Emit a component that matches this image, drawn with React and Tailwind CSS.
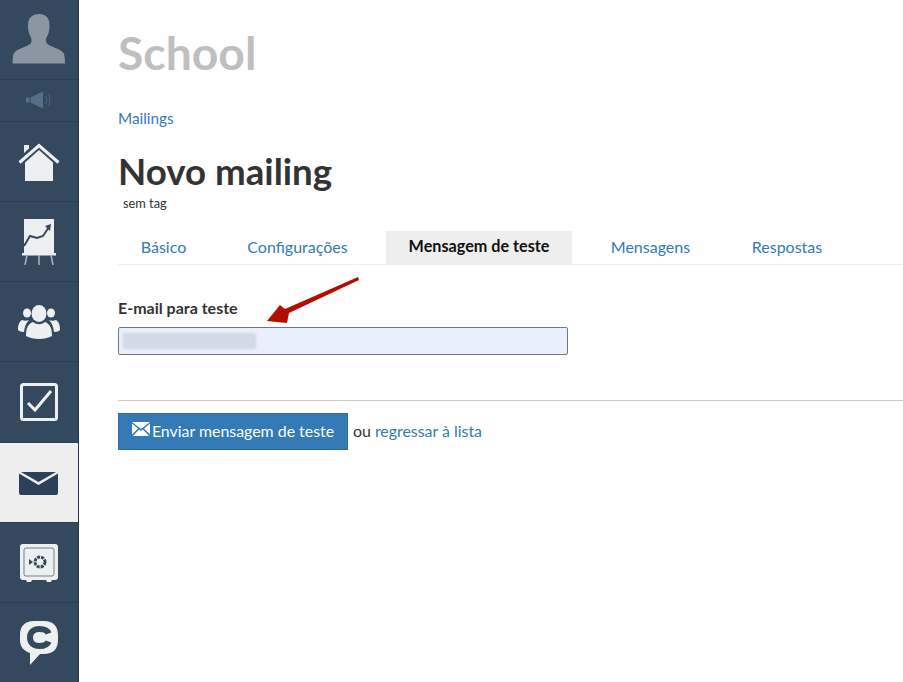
import React from "react";

const Row = ({ h, active, children, last }) => (
  <div className={`flex items-center justify-center shrink-0 ${h} ${active ? "bg-[#eeeeee]" : ""} ${last ? "" : "border-b border-[#2c3e50]"}`}>
    {children}
  </div>
);

const UserIcon = () => (
  <svg width="54" height="52" viewBox="0 0 54 52"><path fill="#8c96a1" d="M27 1c7 0 10.500 4 10.500 11 0 5-.5 8-2.500 11.500-1 2-1.500 4.500-.5 6.500 2.500 3.500 14 5.500 17 10 1 2 1.500 6 1.500 10.500H.5c0-4.500.5-8.500 1.500-10.500 3-4.500 14.500-6.500 17-10 1-2 .5-4.500-.5-6.500C16.500 20 16 17 16 12 16 5 20 1 27 1z"/></svg>
);
const SpeakerIcon = () => (
  <svg width="26" height="18" viewBox="0 0 26 18"><path fill="#557089" d="M0 6.500h3.500v5H0zM4.500 6.500 17 .5v17L4.500 11.500z"/><path fill="none" stroke="#4d667e" strokeWidth="1" d="M19.500 5c1.500 2.500 1.500 5.500 0 8M22 3c2.500 3.500 2.500 8.500 0 12"/></svg>
);
const HomeIcon = () => (
  <svg width="42" height="38" viewBox="0 0 42 38"><path fill="#ecf0f1" d="M6 2h5v3.500L6 10zM7 19.500 21 7l14 12.500V38H7z"/><path fill="none" stroke="#ecf0f1" strokeWidth="3" d="M1.500 19.500 21 2.500l19.500 17"/></svg>
);
const ChartIcon = () => (
  <svg width="34" height="46" viewBox="0 0 34 46">
    <path fill="#ecf0f1" d="M2 0h30v34H2z"/>
    <path fill="none" stroke="#34495e" strokeWidth="2" d="M2 27 8 17l7 2 6-2 6-9"/>
    <path fill="#34495e" d="m23 7 6-2-1 7z"/>
    <path fill="#ecf0f1" d="M0 34h34v2.500H0z"/>
    <path fill="none" stroke="#aeb6bd" strokeWidth="1.500" d="m5 36-2 10M17 36v10M29 36l2 10"/>
  </svg>
);
const UsersIcon = () => (
  <svg width="42" height="34" viewBox="0 0 42 34">
    <g fill="#ecf0f1">
      <ellipse cx="21" cy="8.500" rx="7.500" ry="8.500"/>
      <ellipse cx="9" cy="8" rx="4" ry="4.500"/>
      <ellipse cx="33" cy="8" rx="4" ry="4.500"/>
      <path d="M8 31c0-8 2-12 7-14 4 3 8 3 12 0 5 2 7 6 7 14-7 4-19 4-26 0z"/>
      <path d="M0 25c0-5 1-8 4-10 2 1 5 1 7 0-3 3-4.500 7-5 12-3 0-5-1-6-2zM42 25c0-5-1-8-4-10-2 1-5 1-7 0 3 3 4.500 7 5 12 3 0 5-1 6-2z"/>
    </g>
  </svg>
);
const CheckIcon = () => (
  <svg width="38" height="38" viewBox="0 0 38 38">
    <rect x="1.500" y="1.500" width="35" height="35" rx="2" fill="none" stroke="#ecf0f1" strokeWidth="3"/>
    <path fill="none" stroke="#ecf0f1" strokeWidth="3" d="m8 20 7 7L31 8"/>
  </svg>
);
const MailIcon = () => (
  <svg width="39" height="23" viewBox="0 0 39 23">
    <path fill="#2c4159" d="M0 1.500 19.500 13 39 1.500V21a2 2 0 0 1-2 2H2a2 2 0 0 1-2-2z"/>
    <path fill="#2c4159" d="M2 0h35L19.500 10z"/>
  </svg>
);
const SafeIcon = () => (
  <svg width="38" height="38" viewBox="0 0 38 38">
    <path fill="#ecf0f1" d="M3 0h32a3 3 0 0 1 3 3v30a3 3 0 0 1-3 3h-3l-1 2h-4l-1-2H12l-1 2H7l-1-2H3a3 3 0 0 1-3-3V3a3 3 0 0 1 3-3z"/>
    <rect x="4" y="4" width="30" height="28" rx="2" fill="none" stroke="#6e8091" strokeWidth="1"/>
    <circle cx="20" cy="18" r="5" fill="none" stroke="#34495e" strokeWidth="3" strokeDasharray="3 1"/>
    <path fill="#34495e" d="m9 15 4 3-4 3z"/>
  </svg>
);
const ChatIcon = () => (
  <svg width="38" height="44" viewBox="0 0 38 44">
    <path fill="#ecf0f1" d="M14 0h10c9 0 14 5 14 14v5c0 9-5 14-14 14h-4L10 44V32C4 30 0 26 0 19v-5C0 5 5 0 14 0z"/>
    <path fill="none" stroke="#34495e" strokeWidth="6" d="M28.500 12.500c-1-3-4-4.500-9-4.500-6 0-9.500 3-9.500 8.500S13.500 25 19.500 25c5 0 8-1.500 9-4.500"/>
  </svg>
);

const tabs = [
  { t: "Básico", w: "w-[91px]" },
  { t: "Configurações", w: "w-[145px]" },
  { t: "Mensagem de teste", w: "w-[186px]", active: true },
  { t: "Mensagens", w: "w-[125px]" },
  { t: "Respostas", w: "w-[116px]" },
];

export default function App() {
  return (
    <div className="flex w-[903px] h-[682px] overflow-hidden bg-white font-['Lato','Liberation_Sans',sans-serif]">
      <aside className="w-[79px] shrink-0 h-full flex flex-col bg-[#34495e] border-r border-[#22344a]">
        <Row h="h-[80px]"><div className="pb-[1px]"><UserIcon /></div></Row>
        <Row h="h-[42px]"><div className="pb-[2px]"><SpeakerIcon /></div></Row>
        <Row h="h-[80px]"><HomeIcon /></Row>
        <Row h="h-[80px]"><ChartIcon /></Row>
        <Row h="h-[80px]"><UsersIcon /></Row>
        <Row h="h-[81px]"><CheckIcon /></Row>
        <Row h="h-[80px]" active><div className="pt-[1px] pr-[2px]"><MailIcon /></div></Row>
        <Row h="h-[80px]"><SafeIcon /></Row>
        <Row h="h-[79px]" last><ChatIcon /></Row>
      </aside>
      <main className="flex-1 min-w-0 pl-[39px] relative">
        <h2 className="text-[46.300px] leading-[50px] font-bold text-[#bfbfbf] mt-[27px]">School</h2>
        <a className="block mt-[31px] text-[15.300px] leading-[20px] text-[#337ab7]">Mailings</a>
        <h1 className="mt-[23px] text-[36.700px] leading-[40px] font-bold text-[#333333]">Novo mailing</h1>
        <div className="ml-[5px] mt-[4px] text-[12.800px] leading-[16px] text-[#333333]">sem tag</div>
        <nav className="flex gap-[16px] mt-[20px] h-[34px] border-b border-[#eeeeee]">
          {tabs.map(({ t, w, active }) => (
            <a
              key={t}
              className={`flex items-center justify-center h-[33px] pb-[2px] ${w} ${
                active ? "bg-[#eeeeee] font-bold text-[16.200px] text-[#111111]" : "text-[16px] text-[#337ab7]"
              }`}
            >
              {t}
            </a>
          ))}
        </nav>
        <label className="block mt-[33px] text-[16px] leading-[20px] font-bold text-[#333333]">E-mail para teste</label>
        <div className="mt-[9px] w-[450px] h-[28px] rounded-[2px] border border-[#767676] bg-[#e8f0fe] px-[4px] py-[5px]">
          <div className="w-[133px] h-[16px] bg-[#d3d9e5] blur-[1px]" />
        </div>
        <hr className="mt-[45px] border-t border-[#cccccc]" />
        <div className="mt-[12px] flex items-center text-[15.900px]">
          <button className="flex items-center justify-center w-[230px] h-[37px] pb-[2px] bg-[#337ab7] border border-[#2e6da4] text-white">
            <svg width="18" height="14" viewBox="0 0 18 14" className="mr-[2px] mb-[3px]">
              <path fill="#ffffff" d="M0 0h18L9 7zM0 1.500 6 6.500 0 12.500zM18 1.500 12 6.500 18 12.500zM1 14l6-6.500L9 9l2-1.500 6 6.500z"/>
            </svg>
            Enviar mensagem de teste
          </button>
          <span className="ml-[5px] pb-[2px] text-[#333333]">ou</span>
          <a className="ml-[4px] pb-[2px] text-[#337ab7]">regressar à lista</a>
        </div>
        <svg width="96" height="50" viewBox="0 0 96 50" className="absolute left-[186px] top-[275px]">
          <path fill="#b30d00" d="M93 2 94 5 24 38 22 48 2 46 15 30 20 34z"/>
        </svg>
      </main>
    </div>
  );
}
